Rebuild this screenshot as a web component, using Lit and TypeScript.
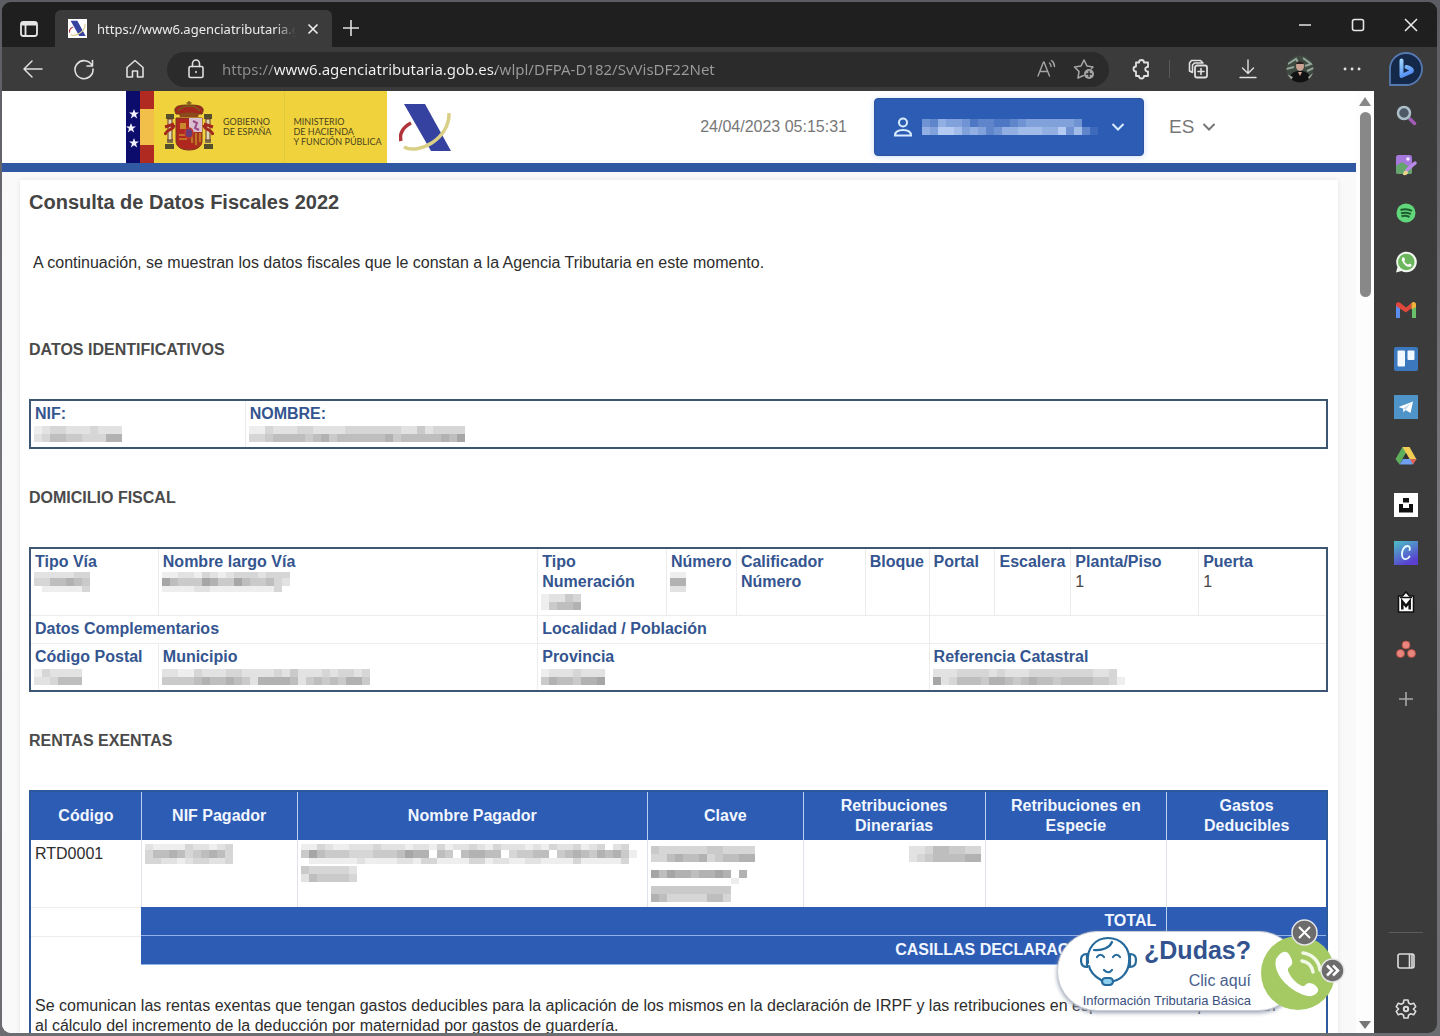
import { LitElement, html, svg, css } from "lit";
import { customElement } from "lit/decorators.js";

const GREY = (level: number) => {
  const v = 250 - level * 12;
  return `rgb(${v},${v},${v})`;
};
const BLUE = (level: number) => {
  const t = level / 9;
  const mix = (a: number, b: number) => Math.round(a + (b - a) * t);
  return `rgb(${mix(45, 196)},${mix(92, 216)},${mix(180, 250)})`;
};

/* Redacted values: every digit is the strength of one 8px cell. */
const redacted = (rows: string[], paint = GREY) => {
  const heights = rows.length === 3 ? [6, 8, 6] : rows.map(() => 8);
  const width = Math.max(...rows.map((r) => r.length)) * 8;
  let y = rows.length === 3 ? 0 : 2;
  const cells: unknown[] = [];
  rows.forEach((row, r) => {
    [...row].forEach((digit, c) => {
      if (digit !== "0") {
        cells.push(svg`<rect x=${c * 8} y=${y} width="8" height=${heights[r]} fill=${paint(Number(digit))}></rect>`);
      }
    });
    y += heights[r];
  });
  return html`<svg class="redacted" width=${width} height="20" viewBox="0 0 ${width} 20" shape-rendering="crispEdges" aria-hidden="true">${cells}</svg>`;
};

const cols = (widths: number[]) => {
  const total = widths.reduce((a, b) => a + b, 0);
  return html`<colgroup>${widths.map((w) => html`<col style="width:${(w / total) * 100}%" />`)}</colgroup>`;
};

const agencyMark = html`<svg class="agency" viewBox="0 0 53 50" aria-hidden="true">
  <path d="M2 38C0 31 4 24 12 20" fill="none" stroke="#b0343c" stroke-width="3.500"></path>
  <path d="M5 1h21l26 47H32z" fill="#36429f"></path>
  <path d="M5 44c14 8 46-8 45-34" fill="none" stroke="#d9cf86" stroke-width="3.500"></path>
</svg>`;

const crest = html`<svg class="crest" viewBox="0 0 50 52" aria-hidden="true">
  <g fill="#56502a">
    <rect x="2" y="15" width="8" height="5"></rect><rect x="40" y="15" width="8" height="5"></rect>
    <rect x="1" y="45" width="9" height="5"></rect><rect x="40" y="45" width="9" height="5"></rect>
    <rect x="3" y="40" width="6" height="4" fill="#7b7350"></rect><rect x="41" y="40" width="6" height="4" fill="#7b7350"></rect>
  </g>
  <g fill="#ded7b4" stroke="#6e3a22" stroke-width="1">
    <rect x="4" y="20" width="4" height="21"></rect><rect x="42" y="20" width="4" height="21"></rect>
  </g>
  <g fill="none" stroke="#a3281d" stroke-width="3">
    <path d="M1 36c1-7 9-4 9-10M49 36c-1-7-9-4-9-10M1 28l9-3M49 28l-9-3"></path>
  </g>
  <path d="M12 15c-4-8 3-9 13-9s17 1 13 9z" fill="#a3281d" stroke="#6b3a17"></path>
  <path d="M14 12c4-5 8-5 11-5s7 0 11 5M25 2v6M22.500 4h5" fill="none" stroke="#7d5a1d" stroke-width="1.500"></path>
  <path d="M15 15c3-2 17-2 20 0l-1 3H16z" fill="#8c4a1c"></path>
  <path d="M12 19h26v23c0 6-6 9-13 9s-13-3-13-9z" fill="#b0271f" stroke="#7a3420"></path>
  <path d="M25 19h13v14H25z" fill="#d9bfcf"></path>
  <path d="M29 22l4 2-2 5 4 2" fill="none" stroke="#9a4b86" stroke-width="2"></path>
  <path d="M25 33h13v9c0 3-1 5-4 7l-9-8z" fill="#a5361c"></path>
  <path d="M16 30v-6h6v6z" fill="#c9882c"></path>
  <path d="M28 34v10M32 34v12M36 34v9M15 36h8M15 40h8" stroke="#c9882c" stroke-width="1.500"></path>
  <ellipse cx="25" cy="34" rx="4" ry="5" fill="#6a3b78" stroke="#c0392b" stroke-width="1.500"></ellipse>
</svg>`;

const chevron = html`<svg class="chevron" viewBox="0 0 14 10" aria-hidden="true">
  <path d="M1.500 2l5.500 5.500L12.500 2" fill="none" stroke="currentColor" stroke-width="2"></path>
</svg>`;

const line = (content: unknown, label: string) => html`<button class="tool" aria-label=${label}>
  <svg viewBox="0 0 24 24" fill="none" stroke="currentColor" stroke-width="1.600" stroke-linecap="round" stroke-linejoin="round">${content}</svg>
</button>`;

const apps: [string, unknown][] = [
  ["Buscar", svg`<circle cx="10" cy="9" r="6" fill="#4d5a66" stroke="#aebfca" stroke-width="2.500"></circle><path d="M15 14l2 2" stroke="#9aa" stroke-width="2.500"></path><path d="M16.500 15.500l4 4" stroke="#a35cb5" stroke-width="3.500" stroke-linecap="round"></path>`],
  ["Editor de imágenes", svg`<rect x="2" y="2" width="16" height="19" rx="2.500" fill="#a678dc"></rect><path d="M2 13l6-4 10 7v3a2 2 0 0 1-2 2H4a2 2 0 0 1-2-2z" fill="#63a56d"></path><circle cx="14" cy="6" r="1.800" fill="#f4e9ff"></circle><path d="M13 17l8-7" stroke="#b98be6" stroke-width="3.500" stroke-linecap="round"></path><path d="M9 22c0-4 2-5 4-4s1 5-4 4z" fill="#ead38a"></path>`],
  ["Spotify", svg`<circle cx="12" cy="12" r="9.500" fill="#62d67b"></circle><path d="M6.500 9c4-1.300 8-1 11.500.8M7 12.300c3.500-1 6.800-.7 9.800.8M7.500 15.300c3-.8 5.500-.5 8 .7" fill="none" stroke="#1d5c2c" stroke-width="2"></path>`],
  ["WhatsApp", svg`<path d="M2 22.500l1.500-5.500A10.300 10.300 0 1 1 7.500 21z" fill="#f0f7ee"></path><circle cx="12.300" cy="12" r="8.300" fill="#6cb75d"></circle><path d="M8.500 7.500c1.300-1 2.200.8 2.500 2 .2.800-1 1-.7 1.800.8 1.700 2 2.700 3.500 3.200.8.200 1-1 1.800-.8 1.300.4 2.600 1.200 1.800 2.200-1.600 2-5 .5-6.900-1.400s-3.600-5.400-2-7z" fill="#fff"></path>`],
  ["Gmail", svg`<path d="M2 6v14h4V9z" fill="#5b8def"></path><path d="M18 9v11h4V6z" fill="#6bbf6b"></path><path d="M2 6.500C2 4 5 3.500 6.500 5L12 9.500 17.500 5v5L12 14.500 2 8z" fill="#e0483b"></path><path d="M17.500 5C19.500 3.300 22 4 22 6.500V9l-4.500 2.500z" fill="#f2b23a"></path>`],
  ["Trello", svg`<rect width="24" height="24" rx="2" fill="#3b78bd"></rect><rect x="3.500" y="3.500" width="7.500" height="16" rx="1" fill="#f2f8ff"></rect><rect x="13.500" y="3.500" width="7" height="9.500" rx="1" fill="#f2f8ff"></rect>`],
  ["Telegram", svg`<rect width="24" height="24" fill="#4f94c9"></rect><path d="M4.500 12L19 6.500 16.500 18l-5-3-2 2.500-.5-4z" fill="#fff"></path><path d="M9 13.500l8-5.500-5.500 7z" fill="#c5dcee"></path>`],
  ["Google Drive", svg`<path d="M8.500 3h7l-3.500 6-6.500 11.500L1.500 15z" fill="#5fae5b"></path><path d="M8.500 3h7l7 12.500h-7z" fill="#f1cd55"></path><path d="M5.500 20.500L9 15h13.500l-4 5.500z" fill="#6e9ff0"></path><path d="M16 15h6.500L19 20.500z" fill="#e0604d"></path><path d="M12 9l3.500 6h-7z" fill="#333"></path>`],
  ["Unsplash", svg`<rect width="24" height="24" fill="#fff"></rect><rect x="9" y="5" width="6" height="4.500" fill="#111"></rect><path d="M5 11h4v4h6v-4h4v8.500H5z" fill="#111"></path>`],
  ["Canva", svg`<defs><linearGradient id="canva" x1="0" y1="0" x2="0.500" y2="1"><stop offset="0" stop-color="#4cc0c6"></stop><stop offset="1" stop-color="#5a3fd0"></stop></linearGradient></defs><rect width="24" height="24" fill="url(#canva)"></rect><path d="M15.500 9c1-2 0-4-2-4-3.500 0-6 5-5.500 9 .4 5.500 5.500 5 7.500 1.500" fill="none" stroke="#e8fbff" stroke-width="1.800" stroke-linecap="round"></path>`],
  ["Markdown", svg`<path d="M4.500 6h4L12 2l3.500 4h4v16h-15z" fill="#fff" stroke="#111" stroke-width="1.500"></path><path d="M6 7.500h12" stroke="#111" stroke-width="1.500"></path><path d="M8.300 19.500v-8L12 16l3.700-4.500v8" fill="none" stroke="#111" stroke-width="2.500"></path>`],
  ["Asana", svg`<g fill="#e8857c" stroke="#b9483f" stroke-width=".8"><circle cx="12" cy="7" r="4"></circle><circle cx="6.500" cy="15.500" r="4"></circle><circle cx="17.500" cy="15.500" r="4"></circle></g>`],
  ["Personalizar", svg`<path d="M12 5v14M5 12h14" stroke="#a8a8a8" stroke-width="1.600"></path>`],
];

@customElement("app-root")
export class AppRoot extends LitElement {
  static styles = css`
    :host {
      display: block;
      height: 100vh;
      box-sizing: border-box;
      padding: 2px 3px 3px 2px;
      background: linear-gradient(180deg, #5c5d63, #77787c 50%, #6c6d70);
      font-family: "Liberation Sans", Arial, sans-serif;
      font-size: 16px;
      line-height: 20px;
      color: #2d2d2d;
      overflow: hidden;
    }
    * { box-sizing: border-box; }
    button, select, input { font: inherit; color: inherit; background: none; border: 0; padding: 0; margin: 0; }
    svg { display: block; flex: none; }
    a { color: inherit; text-decoration: none; }

    .window {
      display: grid;
      grid-template-columns: minmax(0, 1fr) 63px;
      grid-template-rows: 45px 44px minmax(0, 1fr);
      height: 100%;
      border-radius: 9px;
      overflow: hidden;
      background: #3b3b3b;
      color: #e0e0e0;
    }
    .titlebar {
      grid-column: 1 / -1;
      display: flex;
      align-items: stretch;
      background: #1f1f1f;
      font: 13px/20px "Noto Sans", "Open Sans", sans-serif;
    }
    .workspace { display: grid; place-items: center; width: 53px; padding-top: 8px; }
    .workspace svg, .newtab svg { width: 20px; height: 20px; }
    .tab {
      display: flex;
      align-items: center;
      gap: 10px;
      width: 277px;
      margin-top: 8px;
      padding: 0 12px 0 13px;
      background: #3b3b3b;
      border-radius: 6px 6px 0 0;
      color: #ececec;
    }
    .favicon { display: grid; place-items: center; width: 19px; height: 19px; background: #fff; flex: none; }
    .favicon .agency { width: 17px; height: 17px; }
    .tabtitle {
      flex: 1;
      min-width: 0;
      overflow: hidden;
      white-space: nowrap;
      mask-image: linear-gradient(90deg, #000 90%, transparent);
    }
    .tab button svg { width: 14px; height: 14px; }
    .newtab { display: grid; place-items: center; width: 38px; padding-top: 6px; }
    .winctl { display: flex; align-items: center; margin-left: auto; }
    .winctl button { display: grid; place-items: center; width: 53px; height: 40px; }
    .winctl svg { width: 14px; height: 14px; }

    .toolbar { display: flex; align-items: center; }
    .tool { display: grid; place-items: center; flex: none; }
    .tool svg { width: 24px; height: 24px; }
    .navs { display: flex; padding-left: 19px; gap: 27px; }
    .address {
      display: flex;
      align-items: center;
      flex: 1;
      min-width: 0;
      height: 35px;
      margin-left: 20px;
      padding: 0 13px 0 17px;
      gap: 14px;
      border-radius: 18px;
      background: #2b2b2b;
      color: #a5a5a5;
    }
    .address .tool:first-child { color: #dedede; }
    .address input {
      flex: 1;
      min-width: 0;
      height: 30px;
      outline: 0;
      font: 15px/30px "Noto Sans", "Open Sans", sans-serif;
      color: transparent;
      background: linear-gradient(90deg, #8e8e8e 52px, #f4f4f4 52px, #f4f4f4 274px, #9b9b9b 274px);
      -webkit-background-clip: text;
      background-clip: text;
    }
    .extras { display: flex; align-items: center; padding: 0 10px 0 20px; gap: 26px; }
    .extras .rule { width: 1px; height: 18px; margin: 0 -10px; background: #5a5a5a; }
    .extras .avatar svg { width: 28px; height: 28px; }
    .bing { display: grid; place-items: center; }
    .bing svg { width: 36px; height: 36px; }

    .viewport {
      position: relative;
      display: flex;
      min-width: 0;
      overflow: hidden;
      background: #fff;
      color: #2d2d2d;
    }
    .page { flex: 1; min-width: 0; }
    .scroll { display: flex; flex-direction: column; align-items: center; width: 18px; padding: 6px 0 3px; background: #fdfdfd; }
    .scroll .thumb { width: 11px; height: 185px; margin: 5px 0 auto; border-radius: 6px; background: #888; }
    .scroll svg { width: 12px; height: 10px; }

    .sitehead {
      display: flex;
      align-items: center;
      height: 81px;
      padding: 0 140px 0 124px;
      border-bottom: 9px solid #3159a3;
      box-shadow: 0 2px 8px #dce8f8;
      color: #777;
    }
    .gov { display: flex; width: 261px; height: 72px; background: #f0d33c; color: #4b431c; font: 9px/10px Lato, sans-serif; }
    .gov .flag { width: 28px; height: 72px; }
    .crest { width: 50px; height: 52px; margin: 8px 0 0 10px; }
    .gov p { margin: 26px 0 0 9px; white-space: nowrap; }
    .gov p + p { margin: 0 0 0 13px; padding: 26px 0 0 8px; border-left: 1px solid #e0c93a; }
    .sitehead > .agency { width: 53px; height: 50px; margin: 2px 0 0 12px; }
    .clock { margin-left: auto; }
    .user {
      display: flex;
      align-items: center;
      gap: 9px;
      height: 58px;
      margin: 0 25px 0 27px;
      padding: 0 18px;
      border: 1px solid #2a549f;
      border-radius: 4px;
      background: #2d5cb4;
      color: #d8ecff;
      box-shadow: 0 1px 6px #cfe0f8;
    }
    .user .person { width: 20px; height: 20px; }
    .chevron { width: 14px; height: 10px; }
    .user .redacted { margin: 0 4px 0 0; }
    .lang { display: flex; align-items: center; gap: 7px; font-size: 19px; }
    .lang select { appearance: none; }

    .sheetwrap { padding: 8px 18px 0; background: #f9f9f9; }
    .sheet {
      min-height: 900px;
      padding: 12px 10px 0 9px;
      background: #fff;
      box-shadow: 0 0 4px #e4e4e4;
    }
    h1 { margin: 0; font-size: 20px; line-height: 20px; color: #444; }
    .intro { margin: 41px 0 67px 4px; }
    h2 { margin: 39px 0; font-size: 16px; line-height: 20px; color: #4a4a4a; }
    table {
      width: 100%;
      table-layout: fixed;
      border-collapse: separate;
      border-spacing: 0;
      border: 2px solid #3c5674;
    }
    td, th { padding: 3px 4px; vertical-align: top; text-align: left; }
    .data td { border-left: 1px solid #ececec; color: #444; }
    .data td:first-child { border-left: 0; }
    .data tr + tr td { border-top: 1px solid #ececec; }
    .data .mid td { height: 28px; }
    strong { display: block; color: #34558f; white-space: nowrap; }
    .redacted { margin-left: -1px; }

    .rents { border-color: #2c5a9c; border-bottom: 0; }
    .rents th {
      padding: 4px;
      vertical-align: middle;
      text-align: center;
      color: #f2f7ff;
      background: #2d5cb4;
      border-left: 1px solid #b9d0f3;
    }
    .rents tr > :first-child { border-left: 0; }
    .rents td { border-left: 1px solid #dfe4ea; height: 67px; padding-top: 4px; }
    .rents .amount .redacted { margin-left: auto; }
    .rents .sum > * { height: 29px; border-bottom: 1px solid #8fb1e6; background: #2d5cb4; }
    .rents .sum > td:first-child { background: #fff; border-top: 1px solid #ececec; border-bottom: 0; }
    .rents .sum th { text-align: right; padding: 4px 10px; white-space: nowrap; border-left: 0; }
    .rents .sum td:last-child { border-left: 1px solid #b9d0f3; }
    .rents .note td { height: 80px; padding: 31px 36px 0 4px; border-left: 0; }

    .help { position: absolute; right: 27px; bottom: 21px; width: 290px; height: 93px; }
    .pill {
      display: grid;
      grid-template-columns: 58px 1fr;
      width: 242px;
      height: 80px;
      margin-top: 12px;
      padding: 4px 47px 0 22px;
      border: 1px solid #c9ccd4;
      border-radius: 40px;
      background: #fff;
      box-shadow: 0 2px 4px #9aa2b4;
      color: #4a5f8c;
    }
    .pill .agent { width: 58px; height: 50px; grid-row: 1 / 3; }
    .ask { font-size: 25px; line-height: 28px; font-weight: 700; text-align: right; color: #33538f; }
    .click { text-align: right; line-height: 26px; align-self: end; }
    .pill small { grid-column: 1 / -1; font-size: 13px; line-height: 14px; white-space: nowrap; text-align: right; color: #3a5080; }
    .call { position: absolute; left: 203px; top: 16px; }
    .call svg { width: 76px; height: 76px; }
    .close { position: absolute; left: 234px; top: 0; }
    .more { position: absolute; left: 263px; top: 39px; }
    .close svg { width: 27px; height: 27px; }
    .more svg { width: 25px; height: 25px; }

    .side { display: flex; flex-direction: column; align-items: center; padding-top: 1px; }
    .apps { display: grid; grid-auto-rows: 1fr; height: 631px; }
    .apps button { display: grid; place-items: center; width: 48px; }
    .apps svg { width: 24px; height: 24px; }
    .sidefoot { display: grid; grid-auto-rows: 48px; margin-top: auto; padding-top: 4px; border-top: 1px solid #5c5c5c; color: #dcdcdc; width: 34px; }
    .sidefoot button { display: grid; place-items: center; }
    .sidefoot svg { width: 22px; height: 22px; }
  `;

  private chrome() {
    return html`
      <header class="titlebar">
        <button class="workspace" aria-label="Acciones de pestañas">
          <svg viewBox="0 0 20 20" fill="none" stroke="#e6e6e6" stroke-width="1.800"><rect x="2" y="3" width="16" height="14" rx="2.500"></rect><path d="M2.500 5h15" stroke-width="3"></path><path d="M6.500 5v12"></path></svg>
        </button>
        <div class="tab">
          <span class="favicon">${agencyMark}</span>
          <span class="tabtitle">https://www6.agenciatributaria.g</span>
          <button aria-label="Cerrar pestaña"><svg viewBox="0 0 14 14" fill="none" stroke="#eee" stroke-width="1.600"><path d="M2.500 2.500l9 9M11.500 2.500l-9 9"></path></svg></button>
        </div>
        <button class="newtab" aria-label="Nueva pestaña"><svg viewBox="0 0 20 20" stroke="#e0e0e0" stroke-width="1.600"><path d="M10 2v16M2 10h16"></path></svg></button>
        <div class="winctl">
          <button aria-label="Minimizar"><svg viewBox="0 0 14 14" stroke="#e6e6e6" stroke-width="1.600"><path d="M1 7h12"></path></svg></button>
          <button aria-label="Maximizar"><svg viewBox="0 0 14 14" fill="none" stroke="#e6e6e6" stroke-width="1.600"><rect x="1.500" y="1.500" width="11" height="11" rx="2"></rect></svg></button>
          <button aria-label="Cerrar"><svg viewBox="0 0 14 14" stroke="#e6e6e6" stroke-width="1.600"><path d="M1 1l12 12M13 1L1 13"></path></svg></button>
        </div>
      </header>
      <div class="toolbar">
        <div class="navs">
          ${line(svg`<path d="M21 12H3M11 4l-8 8 8 8" stroke-width="1.500"></path>`, "Atrás")}
          ${line(svg`<path d="M20 8.500A9 9 0 1 0 21 12M20.500 3.500v5.500H15"></path>`, "Actualizar")}
          ${line(svg`<path d="M4 10.500L12 3.500l8 7V20h-5.500v-6h-5v6H4z"></path>`, "Inicio")}
        </div>
        <div class="address">
          ${line(svg`<rect x="5" y="9.500" width="14" height="11" rx="1.500"></rect><path d="M8.500 9.500V6.500a3.500 3.500 0 0 1 7 0v3M12 14.500v1"></path>`, "Información del sitio")}
          <input aria-label="Dirección" value="https://www6.agenciatributaria.gob.es/wlpl/DFPA-D182/SvVisDF22Net" />
          ${line(svg`<path d="M4 19L9.500 5h.5l5.500 14M6 14.500h7.500M15.500 6c1 .8 1.500 2 1.500 3.500M17.500 3.500c2 1.500 3 3.500 3 6" stroke-width="1.400"></path>`, "Leer en voz alta")}
          ${line(svg`<path d="M11.500 18.500L6 21l1-6.500L2.500 10l6.500-1L12 3l3 6 6 1-1.500 1.500"></path><circle cx="17" cy="17" r="5" fill="#a5a5a5" stroke="none"></circle><path d="M17 14.500v5M14.500 17h5" stroke="#2b2b2b" stroke-width="1.400"></path>`, "Añadir a favoritos")}
        </div>
        <div class="extras">
          ${line(svg`<path d="M7 5.500h3a2.500 2.500 0 0 1 5 0h4V10a2.300 2.300 0 1 0 0 4.500V19h-4a2.500 2.500 0 0 1-5 0H7v-4.500a2.500 2.500 0 0 1 0-5z" stroke-width="1.800"></path>`, "Extensiones")}
          <span class="rule"></span>
          ${line(svg`<rect x="9" y="8.500" width="12" height="12" rx="2" stroke-width="1.800"></rect><path d="M15 11.500v6M12 14.500h6M6.500 15.500L3.500 14V6l2-2.500h9L17 6M6.500 15V8l2-2H17"></path>`, "Colecciones")}
          ${line(svg`<path d="M12 3v13M6.500 11l5.500 5.500L17.500 11M4 20.500h16" stroke-width="1.400"></path>`, "Descargas")}
          <button class="tool avatar" aria-label="Perfil"><svg viewBox="0 0 28 28"><defs><clipPath id="face"><circle cx="14" cy="14" r="13.500"></circle></clipPath></defs><g clip-path="url(#face)"><rect width="28" height="28" fill="#3f4a42"></rect><path d="M2 9l8-5 3 5M17 3l8 6-6 2M0 14l8-2M28 13l-7 3" stroke="#93a698" stroke-width="2" fill="none"></path><path d="M3 28c0-10 5-12 11-12s11 2 11 12z" fill="#121212"></path><path d="M1 19l6 3-4 6M27 18l-5 4 3 6" fill="#9a9f9a"></path><ellipse cx="14" cy="11" rx="4" ry="5" fill="#c9a393"></ellipse><path d="M10 9c1-4 7-4 8 0z" fill="#2b2320"></path><path d="M12 17l2 4 2-4z" fill="#d3a99a"></path></g></svg></button>
          ${line(svg`<path d="M5 12h.1M12 12h.1M19 12h.1" stroke-width="2.800"></path>`, "Configuración y más")}
        </div>
      </div>
      <button class="bing" aria-label="Bing"><svg viewBox="0 0 36 36"><defs><linearGradient id="b" gradientUnits="userSpaceOnUse" x1="12" y1="8" x2="22" y2="28"><stop offset="0" stop-color="#a4d8ff"></stop><stop offset="1" stop-color="#3f7df0"></stop></linearGradient></defs><path d="M2 34V18A16 16 0 1 1 18 34z" fill="#14284a" stroke="#5579b0" stroke-width="1.800"></path><path d="M13.500 9.500v15.500l10-4.500c1-1.500 0-3-5-4.500" fill="none" stroke="url(#b)" stroke-width="4" stroke-linejoin="round" stroke-linecap="round"></path></svg></button>
    `;
  }

  private siteHead() {
    return html`<header class="sitehead">
      <div class="gov">
        <svg class="flag" viewBox="0 0 28 72" aria-hidden="true"><rect width="14" height="72" fill="#0b0c6b"></rect><rect x="14" width="14" height="72" fill="#f2c04a"></rect><rect x="14" width="14" height="18" fill="#b02a22"></rect><rect x="14" y="54" width="14" height="18" fill="#b02a22"></rect>
          <g fill="#f2f2ff">${[[8, 23], [5, 37], [8, 52]].map(([x, y]) => svg`<path transform="translate(${x} ${y})" d="M0-5l1.300 3.500H5L2 .8l1.200 3.700L0 2.300l-3.200 2.200L-2 .8l-3-2.300h3.700z"></path>`)}</g></svg>
        ${crest}
        <p>GOBIERNO<br />DE ESPAÑA</p>
        <p>MINISTERIO<br />DE HACIENDA<br />Y FUNCIÓN PÚBLICA</p>
      </div>
      ${agencyMark}
      <time class="clock">24/04/2023 05:15:31</time>
      <button class="user" aria-label="Usuario">
        <svg class="person" viewBox="0 0 20 20" fill="none" stroke="currentColor" stroke-width="2"><circle cx="10" cy="5.500" r="4"></circle><path d="M2 18.500c0-4 3-5.500 8-5.500s8 1.500 8 5.500z"></path></svg>
        ${redacted(["4365542332234555555400", "6588756534667776684731"], BLUE)}
        ${chevron}
      </button>
      <label class="lang"><select aria-label="Idioma"><option>ES</option></select>${chevron}</label>
    </header>`;
  }

  private help() {
    return html`<aside class="help">
      <a class="pill" href="#ayuda">
        <svg class="agent" viewBox="0 0 58 50" fill="none" stroke="#266a9c" stroke-width="2.200" stroke-linecap="round">
          <path d="M8 27C6 12 16 2 28 2s23 9 21 25c-1 9-7 16-15 18"></path><path d="M14 14c9 1 16-3 18-8M9 30c1 5 5 10 12 14"></path>
          <path d="M7 18c-5 0-6 3-6 6s1 7 6 7zM50 18c5 0 6 3 6 6s-1 7-6 7z"></path>
          <path d="M17 21c2-3 5-3 7 0M33 21c2-3 5-3 7 0M24 34c3 3 6 3 8 0"></path>
          <rect x="22" y="42" width="11" height="7" rx="3.500" fill="#8fd0ee"></rect>
        </svg>
        <span class="ask">¿Dudas?</span><span class="click">Clic aquí</span>
        <small>Información Tributaria Básica</small>
      </a>
      <button class="call" aria-label="Llamar"><svg viewBox="0 0 76 76"><circle cx="38" cy="38" r="37" fill="#a5ca63"></circle><path d="M16 24c4-7 9-9 12-6 3 4 5 8 4 11-1 3-5 3-4 7 3 7 8 12 14 15 3 1 4-3 7-3 4 0 8 3 9 6 1 4-5 8-10 7C32 58 12 40 16 24z" fill="#fff"></path><path d="M42 26c6 1 10 5 11 11M43 18c9 1 16 8 17 17" fill="none" stroke="#f2f9e6" stroke-width="3.500" stroke-linecap="round"></path></svg></button>
      <button class="close" aria-label="Cerrar ayuda"><svg viewBox="0 0 27 27"><circle cx="13.500" cy="13.500" r="12.500" fill="#6c6c6c" stroke="#e6e6e6" stroke-width="1.500"></circle><path d="M8 8l11 11M19 8L8 19" stroke="#fff" stroke-width="2"></path></svg></button>
      <button class="more" aria-label="Ocultar ayuda"><svg viewBox="0 0 25 25"><circle cx="12.500" cy="12.500" r="11.500" fill="#6c6c6c" stroke="#e6e6e6" stroke-width="1.500"></circle><path d="M7 7.500l5 5-5 5M13 7.500l5 5-5 5" fill="none" stroke="#fff" stroke-width="2.500"></path></svg></button>
    </aside>`;
  }

  private sheet() {
    return html`<main class="sheetwrap"><div class="sheet">
      <h1>Consulta de Datos Fiscales 2022</h1>
      <p class="intro">A continuación, se muestran los datos fiscales que le constan a la Agencia Tributaria en este momento.</p>

      <h2>DATOS IDENTIFICATIVOS</h2>
      <table class="data">
        ${cols([214, 1083])}
        <tr>
          <td><strong>NIF:</strong>${redacted(["12332223222", "23554433366"])}</td>
          <td><strong>NOMBRE:</strong>${redacted(["113222332222333333322423333", "334555545645555556455555657"])}</td>
        </tr>
      </table>

      <h2>DOMICILIO FISCAL</h2>
      <table class="data">
        ${cols([127, 380, 129, 70, 129, 64, 66, 76, 128, 128])}
        <tr>
          <td><strong>Tipo Vía</strong>${redacted(["2222233", "3355654", "0111113"])}</td>
          <td><strong>Nombre largo Vía</strong>${redacted(["1122132123332333", "7544476447544532", "1111221111111130"])}</td>
          <td><strong>Tipo<br />Numeración</strong>${redacted(["12243", "14556"])}</td>
          <td><strong>Número</strong>${redacted(["11", "66", "22"])}</td>
          <td><strong>Calificador<br />Número</strong></td>
          <td><strong>Bloque</strong></td>
          <td><strong>Portal</strong></td>
          <td><strong>Escalera</strong></td>
          <td><strong>Planta/Piso</strong>1</td>
          <td><strong>Puerta</strong>1</td>
        </tr>
        <tr class="mid">
          <td colspan="2"><strong>Datos Complementarios</strong></td>
          <td colspan="4"><strong>Localidad / Población</strong></td>
          <td colspan="4"></td>
        </tr>
        <tr>
          <td><strong>Código Postal</strong>${redacted(["132222", "223555"])}</td>
          <td><strong>Municipio</strong>${redacted(["22113222332222324222323323", "44445655654266665245454664"])}</td>
          <td colspan="4"><strong>Provincia</strong>${redacted(["12223222", "46554667"])}</td>
          <td colspan="4"><strong>Referencia Catastral</strong>${redacted(["222333323222333333332230", "723555466545655455554431"])}</td>
        </tr>
      </table>

      <h2>RENTAS EXENTAS</h2>
      <table class="rents">
        ${cols([110, 156, 351, 156, 182, 182, 160])}
        <thead>
          <tr>
            <th>Código</th><th>NIF Pagador</th><th>Nombre Pagador</th><th>Clave</th>
            <th>Retribuciones<br />Dinerarias</th><th>Retribuciones en<br />Especie</th><th>Gastos<br />Deducibles</th>
          </tr>
        </thead>
        <tbody>
          <tr>
            <td>RTD0001</td>
            <td>${redacted(["21111322123", "35565345653", "33221233223"])}</td>
            <td>
              ${redacted(["113211222322212213122321322212132231230230", "475444333444576605405665503445504565465641", "011111121111221331111331221122111131111130"])}
              ${redacted(["4333332", "2544443"])}
            </td>
            <td>
              ${redacted(["4333333443333", "3356556345566"])}
              ${redacted(["000000000000", "757665667606", "000000000010"])}
              ${redacted(["4444444444", "6533333553"])}
            </td>
            <td class="amount">${redacted(["223554433", "234555566"])}</td>
            <td></td><td></td>
          </tr>
          <tr class="sum"><td></td><th colspan="5" scope="row">TOTAL</th><td></td></tr>
          <tr class="sum"><td></td><th colspan="5" scope="row">CASILLAS DECLARACIÓN RENTA</th><td></td></tr>
          <tr class="note">
            <td colspan="7">Se comunican las rentas exentas que tengan gastos deducibles para la aplicación de los mismos en la declaración de IRPF y las retribuciones en especie exentas que afectan al cálculo del incremento de la deducción por maternidad por gastos de guardería.</td>
          </tr>
        </tbody>
      </table>
    </div></main>`;
  }

  render() {
    return html`<div class="window">
      ${this.chrome()}
      <div class="viewport">
        <div class="page">${this.siteHead()}${this.sheet()}</div>
        <div class="scroll" aria-hidden="true">
          <svg viewBox="0 0 12 10"><path d="M6 0l6 9H0z" fill="#888"></path></svg>
          <span class="thumb"></span>
          <svg viewBox="0 0 12 10"><path d="M0 1h12L6 9z" fill="#777"></path></svg>
        </div>
        ${this.help()}
      </div>
      <nav class="side">
        <div class="apps">${apps.map(([label, art]) => html`<button aria-label=${label}><svg viewBox="0 0 24 24">${art}</svg></button>`)}</div>
        <div class="sidefoot">
          <button aria-label="Ocultar barra lateral"><svg viewBox="0 0 22 22" fill="none" stroke="currentColor" stroke-width="1.600"><rect x="3" y="4" width="16" height="14" rx="2"></rect><path d="M14.500 4v14M17 4v14"></path></svg></button>
          <button aria-label="Configuración"><svg viewBox="0 0 22 22" fill="none" stroke="currentColor" stroke-width="1.600" stroke-linejoin="round"><path d="M9 2h4l.6 3 2.200 1.200 2.900-1 2 3.500L18.400 11l2.300 2.300-2 3.500-2.900-1-2.200 1.200L13 20H9l-.6-3-2.200-1.200-2.900 1-2-3.500L3.600 11 1.300 8.700l2-3.500 2.900 1L8.400 5z"></path><circle cx="11" cy="11" r="2.200" stroke-width="2"></circle></svg></button>
        </div>
      </nav>
    </div>`;
  }
}
